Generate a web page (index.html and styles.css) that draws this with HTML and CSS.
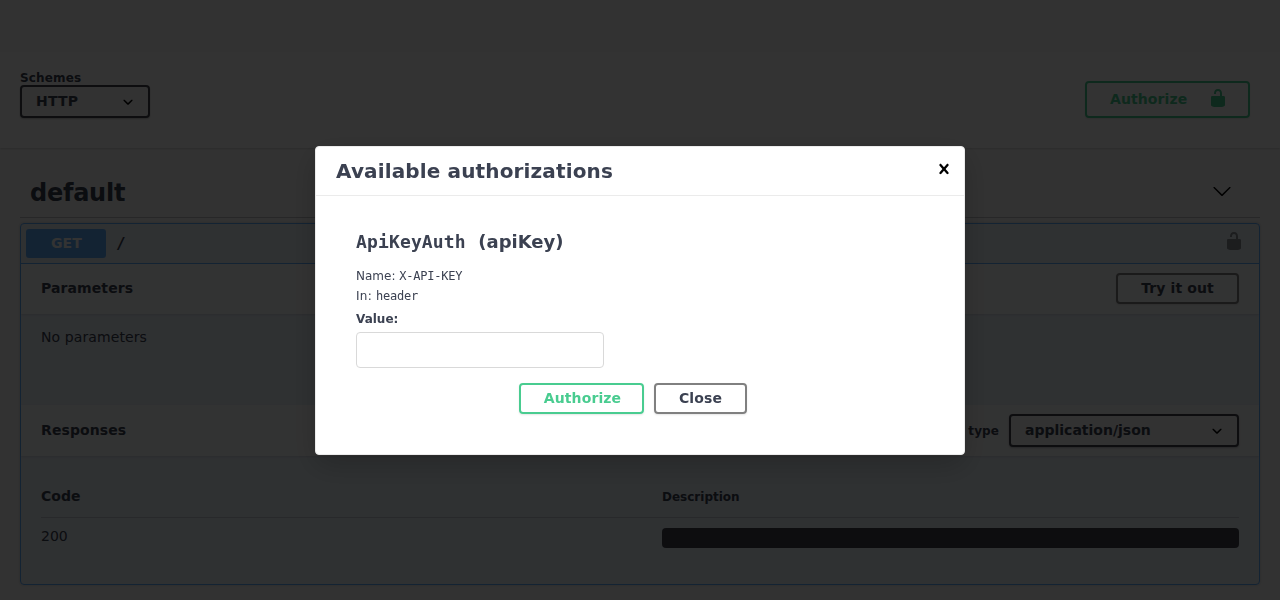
FILE: index.html
```html
<!DOCTYPE html>
<html lang="en">
<head>
<meta charset="utf-8">
<title>API documentation</title>
<link rel="stylesheet" href="styles.css">
</head>
<body>
<svg width="0" height="0" class="defs">
  <symbol id="unlocked" viewBox="0 0 20 20">
    <path d="M15.8 8H14V5.6C14 2.703 12.665 1 10 1 7.334 1 6 2.703 6 5.6V6h2v-.801C8 3.754 8.797 3 10 3c1.203 0 2 .754 2 2.199V8H4c-.553 0-1 .646-1 1.199V17c0 .549.428 1.139.951 1.307l1.197.387C5.672 18.861 6.55 19 7.1 19h5.8c.549 0 1.428-.139 1.951-.307l1.196-.387c.524-.167.953-.757.953-1.306V9.199C17 8.646 16.352 8 15.8 8z"/>
  </symbol>
  <symbol id="arrow-down" viewBox="0 0 20 20">
    <path d="M17.418 6.109c.272-.268.709-.268.979 0s.271.701 0 .969l-7.908 7.83c-.27.268-.707.268-.979 0l-7.908-7.83c-.27-.268-.27-.701 0-.969.271-.268.709-.268.979 0L10 13.25l7.418-7.141z"/>
  </symbol>
  <symbol id="select-arrow" viewBox="0 0 20 20">
    <path d="M13.418 7.859c.271-.268.709-.268.978 0 .27.268.272.701 0 .969l-3.908 3.83c-.27.268-.707.268-.979 0l-3.908-3.83c-.27-.267-.27-.701 0-.969.271-.268.709-.268.978 0L10 11l3.418-3.141z"/>
  </symbol>
  <symbol id="close" viewBox="0 0 20 20">
    <path d="M14.348 14.849c-.469.469-1.229.469-1.697 0L10 11.819l-2.651 3.029c-.469.469-1.229.469-1.697 0-.469-.469-.469-1.229 0-1.697l2.758-3.15-2.759-3.152c-.469-.469-.469-1.228 0-1.697.469-.469 1.228-.469 1.697 0L10 8.183l2.651-3.031c.469-.469 1.228-.469 1.697 0 .469.469.469 1.229 0 1.697l-2.758 3.152 2.758 3.15c.469.469.469 1.229 0 1.698z"/>
  </symbol>
</svg>

<div class="page">
  <section class="scheme-container">
    <div class="schemes">
      <span class="schemes-title">Schemes</span>
      <div class="select scheme-select"><span>HTTP</span><svg><use href="#select-arrow"/></svg></div>
    </div>
    <button class="btn authorize with-lock"><span>Authorize</span><svg><use href="#unlocked"/></svg></button>
  </section>

  <main class="wrapper">
    <h4 class="tag"><span>default</span><svg><use href="#arrow-down"/></svg></h4>
    <section class="opblock">
      <div class="summary">
        <span class="method">GET</span>
        <span class="path">/</span>
        <svg class="lock"><use href="#unlocked"/></svg>
      </div>
      <div class="section-header params-header">
        <h4>Parameters</h4>
        <button class="btn try-out">Try it out</button>
      </div>
      <div class="params"><p>No parameters</p></div>
      <div class="section-header responses-header">
        <h4>Responses</h4>
        <span class="content-type">Response content type</span>
        <div class="select type-select"><span>application/json</span><svg><use href="#select-arrow"/></svg></div>
      </div>
      <div class="responses">
        <div class="row head"><span class="code">Code</span><span class="description">Description</span></div>
        <div class="row"><span class="status">200</span><pre class="example"></pre></div>
      </div>
    </section>
  </main>
</div>

<div class="backdrop">
  <div class="modal">
    <div class="modal-header">
      <h3>Available authorizations</h3>
      <svg><use href="#close"/></svg>
    </div>
    <div class="modal-content">
      <h4><code>ApiKeyAuth</code>&nbsp;&nbsp;(apiKey)</h4>
      <p>Name: <code>X-API-KEY</code></p>
      <p class="location">In: <code>header</code></p>
      <label for="key">Value:</label>
      <input id="key" type="text">
      <div class="actions">
        <button class="btn authorize submit">Authorize</button>
        <button class="btn dismiss">Close</button>
      </div>
    </div>
  </div>
</div>
</body>
</html>
```
FILE: styles.css
```css
* { box-sizing: border-box; }
body {
  margin: 0;
  background: #fafafa;
  color: #3b4151;
  font-family: "DejaVu Sans", sans-serif;
  font-size: 14px;
}
h3, h4, p, pre { margin: 0; }
code { font-family: "DejaVu Sans Mono", monospace; }
.defs { display: block; }
.page { height: 600px; padding-top: 52px; overflow: hidden; }

.btn {
  height: 31px;
  padding: 0;
  border: 2px solid gray;
  border-radius: 4px;
  background: transparent;
  box-shadow: 0 1px 2px rgba(0,0,0,.1);
  color: #3b4151;
  font: bold 14px/25px "DejaVu Sans", sans-serif;
  letter-spacing: .1px;
  text-align: center;
}
.btn.authorize { border-color: #49cc90; color: #49cc90; }
.btn.with-lock {
  display: flex;
  justify-content: space-between;
  width: 165px;
  height: 37px;
  padding: 0 20px 0 23px;
  line-height: 32px;
}
.with-lock svg { width: 20px; height: 20px; margin-top: 5px; fill: #49cc90; }
.try-out { width: 123px; }
.submit { width: 125px; padding-left: 2px; }
.dismiss { width: 93px; }

.select {
  display: flex;
  align-items: center;
  justify-content: space-between;
  height: 33px;
  padding: 0 10px 0 14px;
  border: 2px solid #41444e;
  border-radius: 4px;
  background: #f7f7f7;
  box-shadow: 0 1px 2px rgba(0,0,0,.25);
  font-weight: bold;
}
.select span { padding-bottom: 2px; }
.select svg { width: 20px; height: 20px; }

.scheme-container {
  display: flex;
  justify-content: space-between;
  align-items: flex-end;
  height: 96px;
  padding: 0 30px 30px 20px;
  background: #fff;
  box-shadow: 0 1px 2px rgba(0,0,0,.15);
}
.schemes-title {
  display: block;
  font: bold 12px/13px "DejaVu Sans", sans-serif;
  letter-spacing: .15px;
}
.scheme-select { width: 130px; letter-spacing: .2px; }

.wrapper { padding: 20px 20px 0; }
.tag {
  display: flex;
  align-items: center;
  justify-content: space-between;
  height: 50px;
  padding: 0 28px 0 10px;
  border-bottom: 1px solid rgba(59,65,81,.3);
  font-size: 24px;
  letter-spacing: -.25px;
}
.tag svg { width: 20px; height: 20px; margin-top: -3px; }
.opblock {
  height: 362px;
  margin-top: 5px;
  border: 1px solid #61affe;
  border-radius: 4px;
  background: rgba(97,175,254,.1);
  box-shadow: 0 0 3px rgba(0,0,0,.19);
}
.summary {
  display: flex;
  align-items: center;
  height: 40px;
  padding: 0 15px 0 5px;
  border-bottom: 1px solid #61affe;
}
.method {
  width: 80px;
  padding-left: 1px;
  border-radius: 3px;
  background: #61affe;
  color: #fff;
  font-weight: bold;
  line-height: 29px;
  letter-spacing: .2px;
  text-align: center;
}
.path { padding-left: 10px; font: bold 16px "DejaVu Sans Mono", monospace; }
.lock { width: 20px; height: 20px; margin: -5px 0 0 auto; opacity: .4; }
.section-header {
  display: flex;
  align-items: center;
  padding: 0 20px;
  background: rgba(255,255,255,.8);
  box-shadow: 0 1px 2px rgba(0,0,0,.1);
}
.section-header h4 { flex: 1; padding-bottom: 2px; font-size: 14px; letter-spacing: .1px; }
.params-header { height: 50px; padding-bottom: 1px; }
.responses-header { height: 51px; }
.params { height: 91px; padding: 15px 20px; letter-spacing: .1px; }
.content-type { margin-right: 10px; font-size: 12px; font-weight: bold; letter-spacing: .1px; }
.type-select { width: 230px; }
.responses { padding: 20px; }
.row { display: grid; grid-template-columns: 621px 1fr; padding-top: 10px; }
.head { height: 42px; padding-top: 12px; border-bottom: 1px solid rgba(59,65,81,.2); font-weight: bold; }
.description { padding-top: 2px; font-size: 12px; }
.example { height: 20px; border-radius: 4px; background: #41444e; }

.backdrop {
  position: fixed;
  inset: 0;
  display: grid;
  place-items: center;
  padding-top: 1px;
  background: rgba(0,0,0,.8);
}
.modal {
  width: 650px;
  height: 309px;
  border: 1px solid #ebebeb;
  border-radius: 4px;
  background: #fff;
  box-shadow: 0 10px 30px rgba(0,0,0,.2);
}
.modal-header {
  display: flex;
  align-items: center;
  justify-content: space-between;
  height: 49px;
  padding: 0 10px 0 20px;
  border-bottom: 1px solid #ebebeb;
}
.modal-header h3 { font-size: 20px; letter-spacing: .14px; }
.modal-header svg { width: 20px; height: 20px; margin-top: -4px; }
.modal-content { padding: 35px 40px; font-size: 12px; }
.modal-content h4 { margin-bottom: 14px; font-size: 18px; line-height: 21px; }
.modal-content h4 code { letter-spacing: .14px; }
.modal-content p { line-height: 20px; }
.modal-content p code { letter-spacing: -.22px; }
.modal-content .location { letter-spacing: .25px; }
.modal-content label { display: block; margin-top: 4px; font-weight: bold; line-height: 18px; }
.modal-content input {
  display: block;
  width: 248px;
  height: 36px;
  margin: 4px 0 15px;
  border: 1px solid #d9d9d9;
  border-radius: 4px;
  background: #fff;
}
.actions { display: flex; justify-content: center; gap: 10px; padding-right: 14px; }
```
